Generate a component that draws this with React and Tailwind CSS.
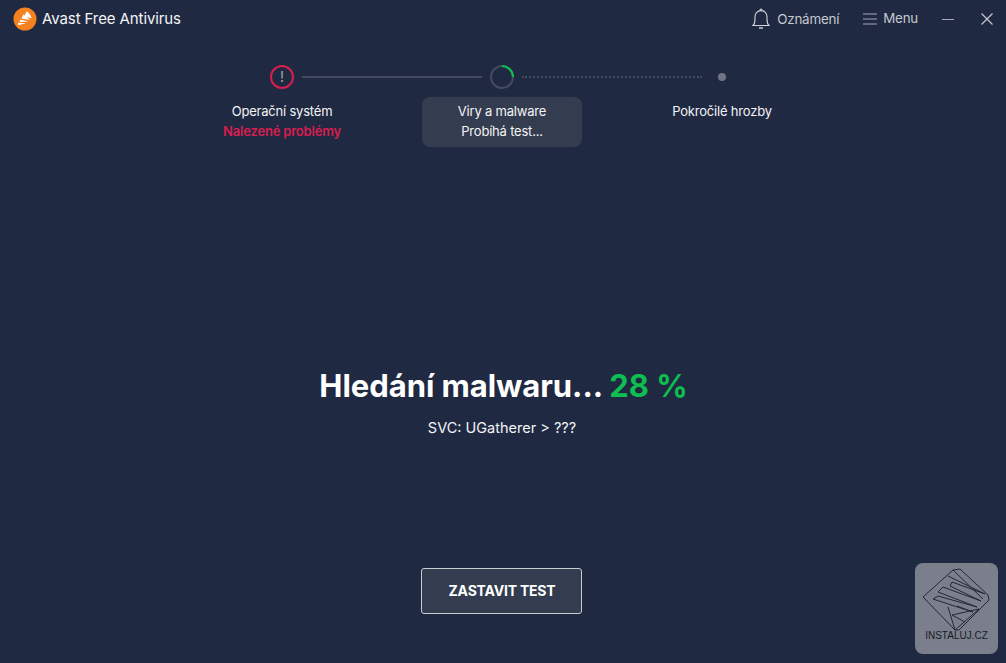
import React from 'react';

const AvastLogo = () => (
  <svg width="24" height="24" viewBox="0 0 24 24">
    <circle cx="12" cy="12" r="11.5" fill="#f5821f" />
    <path d="M13.5 4.2 C15.6 5 17.6 7.4 18.6 11.2 L11.2 9.4 Z" fill="#fff" />
    <path d="M10.2 7.2 L17.4 13 L8.6 11.4 Z" fill="#fff" />
    <path d="M7.4 12.4 L15.6 14.6 L6.4 15 Z" fill="#fff" />
    <path d="M5 15.8 L13 16.2 L5.4 18.2 Z" fill="#fff" />
  </svg>
);

const BellIcon = () => (
  <svg width="18" height="22" viewBox="0 0 18 22" fill="none" stroke="#d3d5da" strokeWidth="1.1">
    <path d="M1 17.5 C2.6 16 3 14.4 3 11 V8.6 C3 5.2 5.6 2.6 9 2.6 C12.4 2.6 15 5.2 15 8.6 V11 C15 14.4 15.4 16 17 17.5 Z" />
    <path d="M8 2.4 C8 0.6 10 0.6 10 2.4" />
    <path d="M7 20 H11" strokeWidth="1.4" />
  </svg>
);

const MenuIcon = () => (
  <svg width="14" height="12" viewBox="0 0 14 12" stroke="#a5a9b3" strokeWidth="1.2">
    <path d="M0 1 H14 M0 6 H14 M0 11 H14" />
  </svg>
);

const Watermark = () => (
  <div className="absolute left-[915px] top-[563px] w-[83px] h-[91px] rounded-[8px] bg-[#7a7f8b] flex flex-col items-center">
    <svg width="76" height="68" viewBox="0 0 76 68" fill="none" stroke="#23283a" strokeWidth="1" className="mt-[2px]">
      <path d="M4 32 L34 5 L64 34" />
      <path d="M34 5 L41 4 L69 30 L70 35 L40 65 L36 65 L4 32" />
      <path d="M29 11 L66 29 L33 17 L31 21 L62 36 L24 22 L19 27 L58 42 L19 31 L14 34 L54 47 L38 41" />
      <path d="M29 42 L36 65 L60 44 L33 50 L46 57" />
    </svg>
    <span className="text-[10px] leading-none text-[#171b29] -mt-[2px] font-['Liberation_Sans',sans-serif]">INSTALUJ.CZ</span>
  </div>
);

const Step = ({ title, status, statusClass = 'text-white', active }) => (
  <div className={`h-[50px] w-[160px] rounded-[8px] flex flex-col items-center pt-[4px] text-[13px] leading-[20px] ${active ? 'bg-[#343c4f]' : ''}`}>
    <span className="text-[#f3f4f6] tracking-[-0.2px]">{title}</span>
    {status && <span className={`tracking-[-0.2px] ${statusClass}`}>{status}</span>}
  </div>
);

export default function App() {
  return (
    <div className="relative w-[1006px] h-[663px] overflow-hidden bg-[#202942] text-white font-['Inter',sans-serif]">
      {/* Title bar */}
      <div className="h-[38px] flex items-center pl-[13px] pr-[13px]">
        <AvastLogo />
        <span className="ml-[5px] text-[15px] text-[#f3f4f6] tracking-[-0.1px]">Avast Free Antivirus</span>
        <div className="ml-auto flex items-center">
          <BellIcon />
          <span className="ml-[7px] text-[13.4px] text-[#c5c8d0] tracking-[-0.2px]">Oznámení</span>
          <div className="ml-[24px]"><MenuIcon /></div>
          <span className="ml-[6px] text-[13.3px] text-[#c5c8d0] tracking-[-0.2px]">Menu</span>
          <div className="ml-[24px] w-[12px] h-[1px] bg-[#a5a9b3]" />
          <svg className="ml-[27px]" width="12" height="12" viewBox="0 0 12 12" stroke="#c5c8d0" strokeWidth="1.2">
            <path d="M0.5 0.5 L11.5 11.5 M11.5 0.5 L0.5 11.5" />
          </svg>
        </div>
      </div>

      <div className="flex flex-col items-center pr-[2px]">
        {/* Stepper */}
        <div className="mt-[27px] flex items-center gap-2">
          <div className="w-[24px] h-[24px] rounded-full border-2 border-[#d81e4f] flex items-center justify-center text-[14px] leading-none text-[#a5a9b3]">!</div>
          <div className="w-[180px] h-[2px] bg-[#444b5e]" />
          <svg width="24" height="24" viewBox="0 0 24 24" fill="none" strokeWidth="2">
            <circle cx="12" cy="12" r="11" stroke="#444b5e" />
            <path d="M12 1 A11 11 0 0 1 23 12" stroke="#0dbf50" />
          </svg>
          <div className="w-[180px] border-t-2 border-dotted border-[#444b5e]" />
          <div className="w-[24px] flex justify-center">
            <div className="w-[8px] h-[8px] rounded-full bg-[#6e7484]" />
          </div>
        </div>

        <div className="mt-[8px] flex gap-[60px]">
          <Step title="Operační systém" status="Nalezené problémy" statusClass="text-[#d81e4f] font-semibold" />
          <Step title="Viry a malware" status="Probíhá test..." statusClass="text-[#f3f4f6]" active />
          <Step title="Pokročilé hrozby" />
        </div>

        {/* Progress */}
        <h1 className="mt-[217px] ml-[3px] text-[31px] leading-[44px] font-bold tracking-[-0.05px]">
          Hledání malwaru... <span className="text-[#0dbf50]">28 %</span>
        </h1>
        <p className="mt-[10px] text-[14.5px] leading-[20px] text-[#f3f4f6]">SVC: UGatherer &gt; ???</p>

        <button className="mt-[130px] mr-[2px] pb-[2px] pl-[2px] w-[161px] h-[46px] rounded-[3px] border border-[#c9ccd3] bg-[#343c4f] text-[14px] font-bold tracking-[-0.2px]">
          ZASTAVIT TEST
        </button>
      </div>

      <Watermark />
    </div>
  );
}
